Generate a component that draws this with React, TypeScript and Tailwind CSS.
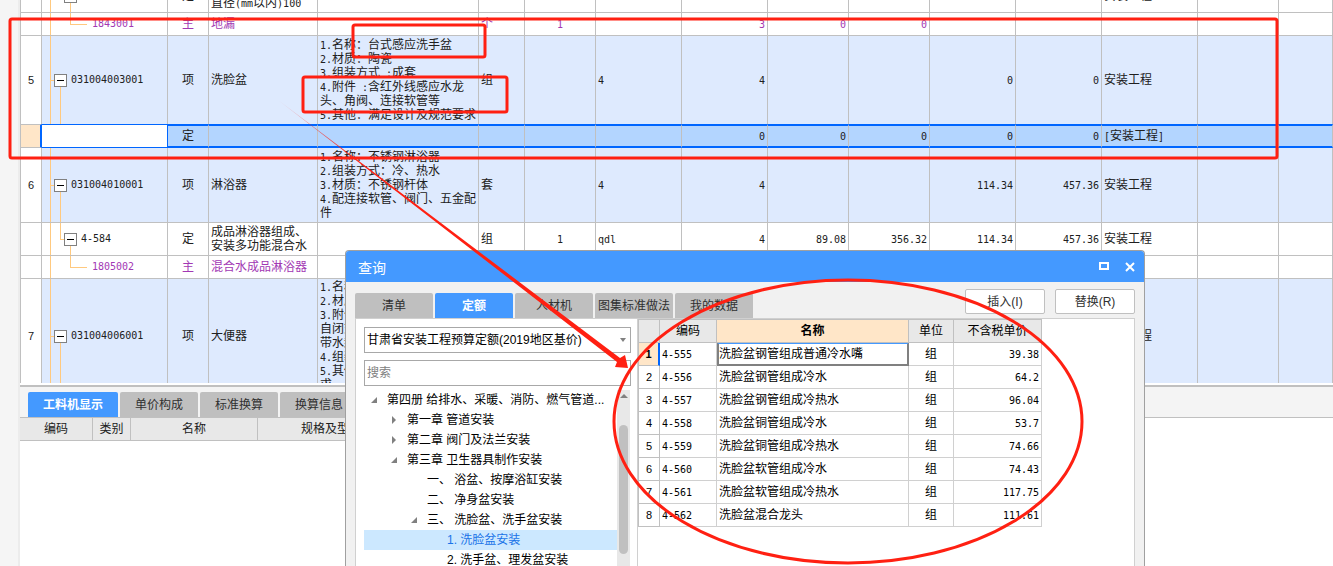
import { clsx } from "clsx";

type RowKind = "item" | "quota" | "main";

interface BillRow {
  id: string;
  kind: RowKind;
  height: string;
  no?: string;
  code: string;
  type: string;
  name: string[];
  desc?: string[];
  unit?: string;
  content?: string;
  formula?: string;
  numbers: string[];
  major?: string;
  selected?: boolean;
}

const billRows: BillRow[] = [
  {
    id: "r1",
    kind: "quota",
    height: "h-[33px]",
    code: "",
    type: "定",
    name: ["", "直径(mm以内)100"],
    unit: "个",
    numbers: ["", "", "", "", ""],
    major: "安装工程",
  },
  {
    id: "r2",
    kind: "main",
    height: "h-[23px]",
    code: "1843001",
    type: "主",
    name: ["地漏"],
    unit: "个",
    content: "1",
    numbers: ["3", "0", "0", "", ""],
  },
  {
    id: "r3",
    kind: "item",
    height: "h-[88px]",
    no: "5",
    code: "031004003001",
    type: "项",
    name: ["洗脸盆"],
    desc: [
      "1.名称：台式感应洗手盆",
      "2.材质：陶瓷",
      "3.组装方式 :成套",
      "4.附件 :含红外线感应水龙",
      "头、角阀、连接软管等",
      "5.其他：满足设计及规范要求",
    ],
    unit: "组",
    formula: "4",
    numbers: ["4", "", "", "0", "0"],
    major: "安装工程",
  },
  {
    id: "r4",
    kind: "quota",
    height: "h-[24px]",
    code: "",
    type: "定",
    name: [],
    numbers: ["0", "0", "0", "0", "0"],
    major: "[安装工程]",
    selected: true,
  },
  {
    id: "r5",
    kind: "item",
    height: "h-[75px]",
    no: "6",
    code: "031004010001",
    type: "项",
    name: ["淋浴器"],
    desc: [
      "1.名称：不锈钢淋浴器",
      "2.组装方式：冷、热水",
      "3.材质：不锈钢杆体",
      "4.配连接软管、阀门、五金配",
      "件",
    ],
    unit: "套",
    formula: "4",
    numbers: ["4", "", "", "114.34", "457.36"],
    major: "安装工程",
  },
  {
    id: "r6",
    kind: "quota",
    height: "h-[33px]",
    code: "4-584",
    type: "定",
    name: ["成品淋浴器组成、", "安装多功能混合水"],
    unit: "组",
    content: "1",
    formula: "qdl",
    numbers: ["4", "89.08", "356.32", "114.34", "457.36"],
    major: "安装工程",
  },
  {
    id: "r7",
    kind: "main",
    height: "h-[23px]",
    code: "1805002",
    type: "主",
    name: ["混合水成品淋浴器"],
    numbers: ["", "", "", "", ""],
  },
  {
    id: "r8",
    kind: "item",
    height: "h-[115px]",
    no: "7",
    code: "031004006001",
    type: "项",
    name: ["大便器"],
    desc: [
      "1.名称",
      "2.材质",
      "3.附件",
      "自闭式",
      "带水封",
      "4.组装",
      "5.其他",
      "求",
    ],
    numbers: ["", "", "", "", ""],
    major: "安装工程",
  },
];

const quotaRows = [
  { code: "4-555", name: "洗脸盆钢管组成普通冷水嘴", price: "39.38" },
  { code: "4-556", name: "洗脸盆钢管组成冷水", price: "64.2" },
  { code: "4-557", name: "洗脸盆钢管组成冷热水", price: "96.04" },
  { code: "4-558", name: "洗脸盆铜管组成冷水", price: "53.7" },
  { code: "4-559", name: "洗脸盆铜管组成冷热水", price: "74.66" },
  { code: "4-560", name: "洗脸盆软管组成冷水", price: "74.43" },
  { code: "4-561", name: "洗脸盆软管组成冷热水", price: "117.75" },
  { code: "4-562", name: "洗脸盆混合龙头", price: "111.61" },
];

const treeNodes = [
  { label: "第四册 给排水、采暖、消防、燃气管道...", indent: "pl-[5px]", state: "open" },
  { label: "第一章 管道安装", indent: "pl-[25px]", state: "closed" },
  { label: "第二章 阀门及法兰安装", indent: "pl-[25px]", state: "closed" },
  { label: "第三章 卫生器具制作安装", indent: "pl-[25px]", state: "open" },
  { label: "一、 浴盆、按摩浴缸安装", indent: "pl-[45px]", state: "leaf" },
  { label: "二、 净身盆安装", indent: "pl-[45px]", state: "leaf" },
  { label: "三、 洗脸盆、洗手盆安装", indent: "pl-[45px]", state: "open" },
  { label: "1. 洗脸盆安装", indent: "pl-[65px]", state: "leaf", selected: true },
  { label: "2. 洗手盆、理发盆安装", indent: "pl-[65px]", state: "leaf" },
];

// Latin runs are set half as wide as a Chinese character
function GridText({ text }: { text: string }) {
  return (
    <>
      {text.split(/([\x20-\x7e]+)/).map((part, i) =>
        i % 2 === 1 ? (
          <span key={i} className="whitespace-pre font-['DejaVu_Sans_Mono',monospace] text-[10px] leading-none">
            {part}
          </span>
        ) : (
          part
        )
      )}
    </>
  );
}

function GridLines({ lines }: { lines: string[] }) {
  return (
    <>
      {lines.map((line, i) => (
        <div key={i} className="h-[14px]">
          <GridText text={line} />
        </div>
      ))}
    </>
  );
}

function TreeLines({ kind }: { kind: RowKind }) {
  return (
    <svg className="absolute inset-0 h-full w-12" stroke="#ffc97f" strokeWidth="1" shapeRendering="crispEdges" aria-hidden="true">
      <line x1="8.5" y1="0" x2="8.5" y2="100%" />
      {kind === "item" && (
        <>
          <line x1="8" y1="50%" x2="12" y2="50%" />
          <line x1="18.5" y1="50%" x2="18.5" y2="100%" />
        </>
      )}
      {kind === "quota" && (
        <>
          <line x1="18.5" y1="0" x2="18.5" y2="50%" />
          <line x1="18" y1="50%" x2="22" y2="50%" />
          <line x1="28.5" y1="50%" x2="28.5" y2="100%" />
        </>
      )}
      {kind === "main" && (
        <>
          <line x1="28.5" y1="0" x2="28.5" y2="50%" />
          <line x1="28" y1="50%" x2="45" y2="50%" />
        </>
      )}
    </svg>
  );
}

function CodeCell({ row }: { row: BillRow }) {
  return (
    <>
      <TreeLines kind={row.kind} />
      <div
        className={clsx(
          "relative flex items-center gap-1",
          row.kind === "item" && "pl-3",
          row.kind === "quota" && "pl-[22px]",
          row.kind === "main" && "pl-[50px]"
        )}
      >
        {row.kind !== "main" && (
          <button
            aria-label="折叠"
            className="flex size-[13px] items-center justify-center border border-[#808080] bg-white"
          >
            <span className="h-px w-[7px] bg-black" />
          </button>
        )}
        <GridText text={row.code} />
      </div>
    </>
  );
}

function BillTable() {
  return (
    <table className="-mt-5 w-full min-w-[1300px] table-fixed border-separate border-spacing-0 border-l border-[#c0c0c0] text-xs leading-[14px]">
      <colgroup>
        <col className="w-[21px]" />
        <col className="w-[126px]" />
        <col className="w-[41px]" />
        <col className="w-[109px]" />
        <col className="w-[161px]" />
        <col className="w-[46px]" />
        <col className="w-[71px]" />
        <col className="w-[86px]" />
        <col className="w-[86px]" />
        <col className="w-[81px]" />
        <col className="w-[81px]" />
        <col className="w-[86px]" />
        <col className="w-[86px]" />
        <col className="w-[96px]" />
        <col className="w-[81px]" />
        <col />
      </colgroup>
      <tbody>
        {billRows.map((row) => {
          const cell = clsx(
            "whitespace-nowrap border-r border-r-[#c0c0c0] p-0",
            row.selected
              ? "border-y-2 border-y-[#0066ff] bg-[#b3d5ff]"
              : row.id === "r3"
                ? ""
                : "border-b border-b-[#c0c0c0]",
            row.kind === "item" && "bg-[#deeafe]"
          );
          return (
            <tr key={row.id} className={clsx(row.height, row.kind === "main" ? "text-[#a238b4]" : "text-[#202020]")}>
              <th
                className={clsx(
                  "p-0 text-center font-['Liberation_Sans',sans-serif] text-[11px] font-normal",
                  row.selected
                    ? "border-y border-r-2 border-y-[#c0c0c0] border-r-[#0066ff] bg-[#ffe6c8]"
                    : "border-r border-[#c0c0c0] bg-white",
                  !row.selected && row.id !== "r3" && "border-b"
                )}
              >
                {row.no}
              </th>
              {row.selected ? (
                <td className="border-y border-r border-[#0066ff] bg-white p-0" />
              ) : (
                <td className={clsx(cell, "relative")}>
                  <CodeCell row={row} />
                </td>
              )}
              <td className={clsx(cell, "text-center")}>{row.type}</td>
              <td className={clsx(cell, "pl-[2px]")}>
                <GridLines lines={row.name} />
              </td>
              <td className={clsx(cell, "pl-[2px]")}>
                <GridLines lines={row.desc ?? []} />
              </td>
              <td className={clsx(cell, "pl-[2px]")}>{row.unit}</td>
              <td className={clsx(cell, "text-center")}>
                <GridText text={row.content ?? ""} />
              </td>
              <td className={clsx(cell, "pl-[2px]")}>
                <GridText text={row.formula ?? ""} />
              </td>
              {row.numbers.map((value, i) => (
                <td key={i} className={clsx(cell, "pr-[2px] text-right")}>
                  <GridText text={value} />
                </td>
              ))}
              <td className={clsx(cell, "pl-[2px]")}>
                <GridText text={row.major ?? ""} />
              </td>
              <td className={cell} />
              <td className={cell} />
            </tr>
          );
        })}
      </tbody>
    </table>
  );
}

function DetailPane() {
  return (
    <section className="flex-1 border-t-2 border-[#c0c0c0] bg-white">
      <div className="flex gap-[2px] border-b border-[#c0c0c0] bg-[#f4f4f4] pt-[5px] pl-2 text-xs">
        <button className="h-[25px] w-[90px] rounded-t-xs bg-[#4499ff] font-bold text-white">工料机显示</button>
        {["单价构成", "标准换算", "换算信息"].map((tab) => (
          <button key={tab} className="h-[25px] w-[78px] rounded-t-xs bg-[#bfbfbf] text-[#303030]">
            {tab}
          </button>
        ))}
      </div>
      <table className="w-[385px] table-fixed border-separate border-spacing-0 text-xs text-[#202020]">
        <thead>
          <tr className="h-[23px] bg-[#e8e8e8]">
            <th className="w-[73px] border-r border-b border-[#c0c0c0] p-0 font-normal">编码</th>
            <th className="w-[38px] border-r border-b border-[#c0c0c0] p-0 font-normal">类别</th>
            <th className="w-[127px] border-r border-b border-[#c0c0c0] p-0 font-normal">名称</th>
            <th className="border-r border-b border-[#c0c0c0] p-0 font-normal">规格及型号</th>
          </tr>
        </thead>
      </table>
    </section>
  );
}

function NodeArrow({ state }: { state: string }) {
  return (
    <svg className="size-[10px] shrink-0" viewBox="0 0 10 10" fill="#808080" aria-hidden="true">
      {state === "open" && <path d="M8 2v6H2z" />}
      {state === "closed" && <path d="M3 1l4 4-4 4z" />}
    </svg>
  );
}

function QuotaTree() {
  return (
    <div className="flex w-[282px] shrink-0 flex-col border-r border-[#d0d0d0] pt-2 pl-2">
      <div className="relative w-[267px]">
        <select
          aria-label="定额库"
          className="h-[26px] w-full appearance-none border border-[#a8a8a8] bg-white pl-[2px] text-xs text-black"
        >
          <option>甘肃省安装工程预算定额(2019地区基价)</option>
        </select>
        <svg className="pointer-events-none absolute top-[11px] right-[5px] h-1 w-[6px]" viewBox="0 0 6 4" fill="#808080" aria-hidden="true">
          <path d="M0 0h6L3 4z" />
        </svg>
      </div>
      <input
        aria-label="搜索"
        placeholder="搜索"
        className="mt-[7px] h-[26px] w-[267px] border border-[#a8a8a8] bg-white pl-[2px] text-xs placeholder:text-[#808080]"
      />
      <div className="mt-1 flex min-h-0 flex-1 overflow-hidden">
        <ul className="w-[253px] text-xs text-black">
          {treeNodes.map((node) => (
            <li
              key={node.label}
              className={clsx(
                "flex h-5 items-center gap-2 whitespace-nowrap",
                node.indent,
                node.selected && "bg-[#cce8ff] text-[#1a73e8]"
              )}
            >
              <NodeArrow state={node.state} />
              {node.label}
            </li>
          ))}
        </ul>
        <div className="flex w-[13px] flex-col items-center bg-[#e8e8e8] pt-1">
          <svg className="h-1 w-2" viewBox="0 0 8 4" fill="#808080" aria-hidden="true">
            <path d="M0 4h8L4 0z" />
          </svg>
          <div className="mt-[27px] h-[129px] w-[9px] rounded-full bg-[#c0c0c0]" />
        </div>
      </div>
    </div>
  );
}

function QuotaTable() {
  const head = "border-r border-b border-[#c0c0c0] p-0 font-normal";
  const cell = "border-r border-b border-[#d0d0d0] p-0 whitespace-nowrap";
  return (
    <table className="w-[404px] table-fixed self-start border-separate border-spacing-0 border-l border-[#c0c0c0] text-xs leading-[14px] text-black">
      <thead>
        <tr className="h-6 bg-[#e8e8e8]">
          <th className={clsx(head, "w-[21px] border-t")} />
          <th className={clsx(head, "w-[57px] border-t")}>编码</th>
          <th className="w-[192px] border-t border-r border-b border-[#c0c0c0] bg-[#ffe6c8] p-0 font-bold">名称</th>
          <th className={clsx(head, "w-[45px] border-t")}>单位</th>
          <th className={clsx(head, "w-[88px] border-t")}>不含税单价</th>
        </tr>
      </thead>
      <tbody>
        {quotaRows.map((row, i) => (
          <tr key={row.code} className="h-[23px]">
            <th
              className={clsx(
                "border-b border-[#c0c0c0] p-0 font-['Liberation_Sans',sans-serif] text-[11px]",
                i === 0 ? "border-r-2 border-r-[#0066ff] bg-[#ffe6c8] font-bold" : "border-r font-normal"
              )}
            >
              {i + 1}
            </th>
            <td className={clsx(cell, "pl-[2px]")}>
              <GridText text={row.code} />
            </td>
            <td
              className={
                i === 0
                  ? "border-x-2 border-t border-b-2 border-[#808080] border-t-[#4499ff] p-0 whitespace-nowrap"
                  : "border-r border-b border-[#d0d0d0] p-0 pl-[2px] whitespace-nowrap"
              }
            >
              {row.name}
            </td>
            <td className={clsx(cell, "text-center")}>组</td>
            <td className={clsx(cell, "pr-[2px] text-right")}>
              <GridText text={row.price} />
            </td>
          </tr>
        ))}
      </tbody>
    </table>
  );
}

function QueryDialog() {
  return (
    <div
      role="dialog"
      aria-label="查询"
      className="absolute top-[250px] bottom-0 left-[345px] flex w-[800px] flex-col overflow-hidden rounded-t border border-b-0 border-[#a0a0a0] bg-[#f1f1f1]"
    >
      <header className="flex h-[31px] shrink-0 items-center bg-[#4499ff] pr-2 pl-3 text-white">
        <h1 className="flex-1 pt-[2px] text-sm">查询</h1>
        <button aria-label="最大化" className="mr-[14px]">
          <svg className="h-[9px] w-3" viewBox="0 0 12 9" fill="none" stroke="currentColor" strokeWidth="2">
            <path d="M2 1h8v6H2z" />
          </svg>
        </button>
        <button aria-label="关闭">
          <svg className="h-[10px] w-3" viewBox="0 0 12 10" fill="none" stroke="currentColor" strokeWidth="2">
            <path d="M2 1l8 8M10 1L2 9" />
          </svg>
        </button>
      </header>
      <div className="flex h-9 shrink-0 items-end px-[9px] text-xs text-[#303030]">
        <div className="flex flex-1 gap-[2px]">
          {["清单", "定额", "人材机", "图集标准做法", "我的数据"].map((tab) => (
            <button
              key={tab}
              className={clsx(
                "h-[25px] w-[78px] rounded-t-xs whitespace-nowrap",
                tab === "定额" ? "bg-[#4499ff] font-bold text-white" : "bg-[#bfbfbf]"
              )}
            >
              {tab}
            </button>
          ))}
        </div>
        <div className="flex gap-[10px] pb-1">
          <button className="h-[25px] w-20 rounded-xs border border-[#c0c0c0] bg-white">插入(I)</button>
          <button className="h-[25px] w-20 rounded-xs border border-[#c0c0c0] bg-white">替换(R)</button>
        </div>
      </div>
      <div className="mx-[9px] flex min-h-0 flex-1 border-x border-t border-[#d0d0d0] bg-white">
        <QuotaTree />
        <QuotaTable />
      </div>
    </div>
  );
}

// Red pen marks drawn over the whole window
function Markup() {
  return (
    <svg className="pointer-events-none absolute inset-0 size-full" fill="none" stroke="#ff2012" strokeWidth="3" aria-hidden="true">
      <defs>
        <linearGradient id="tail" gradientUnits="userSpaceOnUse" x1="278" y1="100" x2="360" y2="163">
          <stop offset="0" stopColor="#ff2012" stopOpacity="0.2" />
          <stop offset="1" stopColor="#ff2012" />
        </linearGradient>
      </defs>
      <rect x="10" y="19" width="1267" height="139" rx="2" />
      <rect x="353" y="25" width="132" height="32" rx="2" />
      <rect x="303" y="77" width="204" height="35" rx="2" />
      <ellipse cx="848" cy="421.5" rx="234" ry="141.5" />
      <path d="M278 100L620 358l5-3 3 13-13-1 2-5z" fill="url(#tail)" stroke="none" />
    </svg>
  );
}

export default function App() {
  return (
    <main className="relative flex h-screen overflow-hidden bg-white font-['Liberation_Sans','Noto_Sans_CJK_SC',sans-serif]">
      <aside className="w-5 shrink-0 border-r-2 border-[#ececec] bg-[#f5f5f5]" />
      <div className="flex min-w-0 flex-1 flex-col">
        <section className="mb-[2px] h-[383px] shrink-0 overflow-hidden">
          <BillTable />
        </section>
        <DetailPane />
      </div>
      <QueryDialog />
      <Markup />
    </main>
  );
}
